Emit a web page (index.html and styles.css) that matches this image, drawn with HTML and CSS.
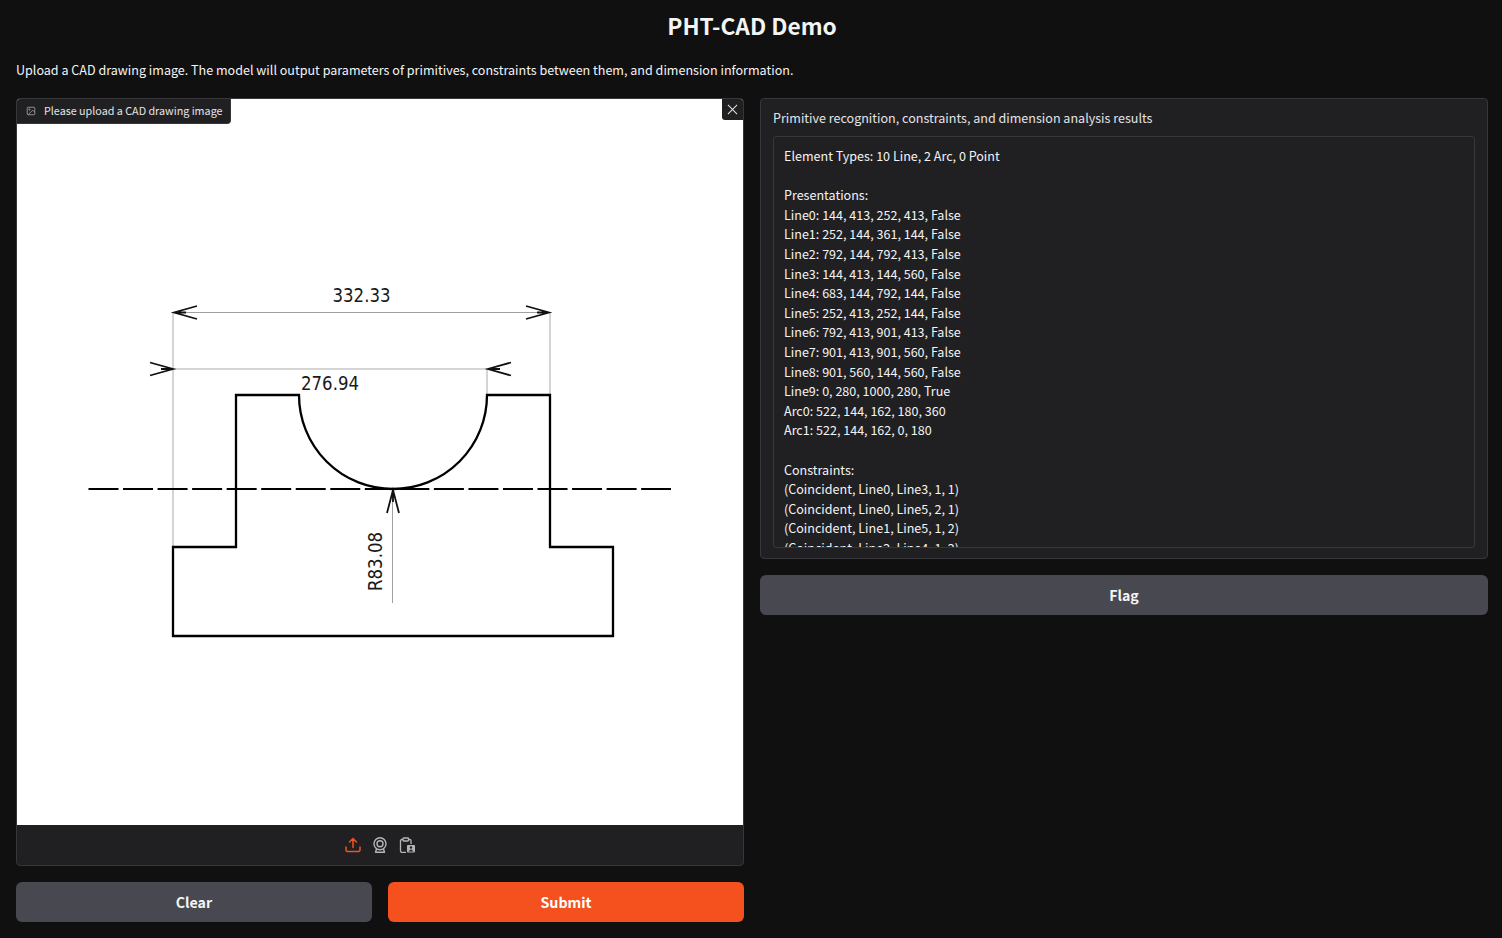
FILE: index.html
```html
<!DOCTYPE html>
<html lang="en">
<head>
<meta charset="UTF-8">
<title>PHT-CAD Demo</title>
<link rel="stylesheet" href="styles.css">
</head>
<body>

<h1 class="title">PHT-CAD Demo</h1>
<p class="intro">Upload a CAD drawing image. The model will output parameters of primitives, constraints between them, and dimension information.</p>

<div class="columns">
    <div class="col">
        <div class="image-block">
            <div class="image-label">
                <svg class="label-icon" viewBox="0 0 24 24" fill="none" stroke="currentColor" stroke-width="2">
                    <rect x="3" y="3" width="18" height="18" rx="2"/>
                    <circle cx="8.5" cy="8.5" r="1.5"/>
                    <path d="M21 15l-5-5L5 21"/>
                </svg>
                <span>Please upload a CAD drawing image</span>
            </div>
            <button class="close-btn" aria-label="Remove">
                <svg viewBox="0 0 12 12" fill="none" stroke="currentColor" stroke-width="1.1">
                    <path d="M1 1l10 10M11 1L1 11"/>
                </svg>
            </button>
            <div class="canvas">
                <svg class="drawing" viewBox="17 99 726 726">
                    <path class="dim-light" d="M173 313V547M550 313V395M487 369V395M173 369H487"/>
                    <path class="dim-dark" d="M173 312.5H550M392.5 489V603"/>
                    <g class="arrow">
                        <path d="M197 306L174 312.5L197 319M526 306L549 312.5L526 319M174 312.5H186M549 312.5H537"/>
                        <path d="M150 362.5L173 369L150 375.500M511 362.5L488 369L511 375.5M173 369H161M488 369H500"/>
                        <path d="M387 513L393 490L399 513M393 490V502"/>
                    </g>
                    <path class="outline" d="M173 547H236V395H299A94 94 0 0 0 487 395H550V547H613V636H173Z"/>
                    <path class="center" d="M88.5 489H671"/>
                    <text class="dim-text" x="361.5" y="301.5" text-anchor="middle" textLength="58" lengthAdjust="spacingAndGlyphs">332.33</text>
                    <text class="dim-text" x="330" y="390" text-anchor="middle" textLength="58" lengthAdjust="spacingAndGlyphs">276.94</text>
                    <text class="dim-text" text-anchor="middle" textLength="59" lengthAdjust="spacingAndGlyphs" transform="translate(382 561.5) rotate(-90)">R83.08</text>
                </svg>
            </div>
            <div class="toolbar">
                <svg class="tool active" viewBox="0 0 16 16" fill="none" stroke="currentColor" stroke-width="1.5" stroke-linecap="round" stroke-linejoin="round">
                    <path d="M8 10.5V1.5M4.5 5L8 1.5L11.5 5"/>
                    <path d="M1 10V13a1.5 1.5 0 0 0 1.5 1.5H13.5a1.5 1.5 0 0 0 1.5-1.5V10"/>
                </svg>
                <svg class="tool" viewBox="0 0 16 16" fill="none" stroke="currentColor" stroke-width="1.4" stroke-linejoin="round">
                    <circle cx="8" cy="6.7" r="6"/>
                    <circle cx="8" cy="6.7" r="3"/>
                    <path d="M4.5 12L3.5 15.2H12.5L11.5 12"/>
                </svg>
                <svg class="tool" viewBox="0 0 16 16" fill="none" stroke="currentColor" stroke-width="1.3" stroke-linejoin="round">
                    <path d="M4 2.5H2.8A1.3 1.3 0 0 0 1.5 3.8V14A1.3 1.3 0 0 0 2.8 15.3H7"/>
                    <path d="M9.5 2.5H10.7A1.3 1.3 0 0 1 12 3.8V7"/>
                    <rect x="4" y="1" width="5.5" height="3" rx="0.7"/>
                    <rect class="tool-fill" x="8" y="8" width="8" height="7.5" rx="1"/>
                    <circle class="tool-hole" cx="12" cy="10.5" r="1.2"/>
                    <path class="tool-hole" d="M9.3 14.5L12 12.2L14.7 14.5Z"/>
                </svg>
            </div>
        </div>
        <div class="btn-row">
            <button class="btn">Clear</button>
            <button class="btn btn-primary">Submit</button>
        </div>
    </div>

    <div class="col">
        <div class="output-block">
            <div class="output-label">Primitive recognition, constraints, and dimension analysis results</div>
            <div class="output-box">Element Types: 10 Line, 2 Arc, 0 Point

Presentations:
Line0: 144, 413, 252, 413, False
Line1: 252, 144, 361, 144, False
Line2: 792, 144, 792, 413, False
Line3: 144, 413, 144, 560, False
Line4: 683, 144, 792, 144, False
Line5: 252, 413, 252, 144, False
Line6: 792, 413, 901, 413, False
Line7: 901, 413, 901, 560, False
Line8: 901, 560, 144, 560, False
Line9: 0, 280, 1000, 280, True
Arc0: 522, 144, 162, 180, 360
Arc1: 522, 144, 162, 0, 180

Constraints:
(Coincident, Line0, Line3, 1, 1)
(Coincident, Line0, Line5, 2, 1)
(Coincident, Line1, Line5, 1, 2)
(Coincident, Line2, Line4, 1, 2)</div>
        </div>
        <button class="btn">Flag</button>
    </div>
</div>

</body>
</html>
```

FILE: styles.css
```css
body {
    font-family: "Noto Sans CJK SC", "Source Sans Pro", sans-serif;
    margin: 0;
    padding: 0 14px 0 16px;
    background-color: #101011;
    color: #f4f4f5;
    font-size: 12.55px;
    line-height: 19.6px;
    height: 938px;
    overflow: hidden;
    box-sizing: border-box;
}
.title {
    margin: 0;
    padding-top: 9px;
    font-size: 22.7px;
    line-height: 34px;
    font-weight: 600;
    text-align: center;
}
.intro {
    margin: 17px 0 0;
    height: 20px;
}
.columns {
    display: grid;
    grid-template-columns: 728px 728px;
    gap: 16px;
    margin-top: 18px;
}
.col {
    display: flex;
    flex-direction: column;
    gap: 16px;
}
.image-block {
    position: relative;
    border: 1px solid #37373b;
    border-radius: 4px;
    background-color: #202023;
    overflow: hidden;
}
.image-label {
    position: absolute;
    top: 0;
    left: 0;
    display: flex;
    align-items: center;
    height: 24px;
    padding: 0 8px;
    gap: 8px;
    background-color: #202023;
    border-right: 1px solid #37373b;
    border-bottom: 1px solid #37373b;
    border-bottom-right-radius: 4px;
    font-size: 10.75px;
    line-height: 16px;
    color: #e4e4e7;
}
.label-icon {
    width: 10px;
    height: 10px;
    margin-left: 1px;
    color: #a1a1aa;
}
.close-btn {
    position: absolute;
    top: 0;
    right: 0;
    width: 21px;
    height: 21px;
    padding: 5px;
    border: none;
    border-bottom-left-radius: 3px;
    background-color: #202023;
    color: #e4e4e7;
}
.close-btn svg {
    display: block;
    width: 11px;
    height: 11px;
}
.canvas {
    height: 726px;
    background-color: #fff;
}
.drawing {
    display: block;
    width: 726px;
    height: 726px;
}
.dim-light {
    fill: none;
    stroke: #c8c8c8;
    stroke-width: 1.5;
}
.dim-dark {
    fill: none;
    stroke: #a0a0a0;
    stroke-width: 1;
}
.arrow path {
    fill: none;
    stroke: #111;
    stroke-width: 1.8;
}
.outline {
    fill: none;
    stroke: #000;
    stroke-width: 2.3;
}
.center {
    fill: none;
    stroke: #000;
    stroke-width: 2.2;
    stroke-dasharray: 30 4.54;
}
.dim-text {
    font-family: "DejaVu Sans", sans-serif;
    font-size: 19.5px;
    fill: #1a1a1a;
}
.toolbar {
    display: flex;
    justify-content: center;
    align-items: center;
    height: 40px;
    gap: 11px;
}
.tool {
    width: 16px;
    height: 16px;
    color: #b4b4ba;
}
.tool.active {
    color: #f4511e;
}
.tool-fill {
    fill: #b4b4ba;
    stroke: none;
}
.tool-hole {
    fill: #202023;
    stroke: none;
}
.btn-row {
    display: grid;
    grid-template-columns: 1fr 1fr;
    gap: 16px;
}
.btn {
    height: 40px;
    padding: 0;
    border: none;
    border-radius: 6px;
    background-color: #484850;
    color: #f4f4f5;
    font-family: inherit;
    font-size: 14.2px;
    font-weight: 600;
    cursor: pointer;
}
.btn-primary {
    background-color: #f4511e;
    color: #fff;
}
.output-block {
    height: 461px;
    box-sizing: border-box;
    padding: 10px 12px;
    border: 1px solid #37373b;
    border-radius: 4px;
    background-color: #202023;
}
.output-label {
    height: 18px;
    line-height: 18px;
    color: #e4e4e7;
}
.output-box {
    height: 412px;
    box-sizing: border-box;
    margin-top: 9px;
    padding: 9px 10px 0;
    border: 1px solid #37373b;
    border-radius: 3px;
    white-space: pre-wrap;
    overflow: hidden;
}
```
